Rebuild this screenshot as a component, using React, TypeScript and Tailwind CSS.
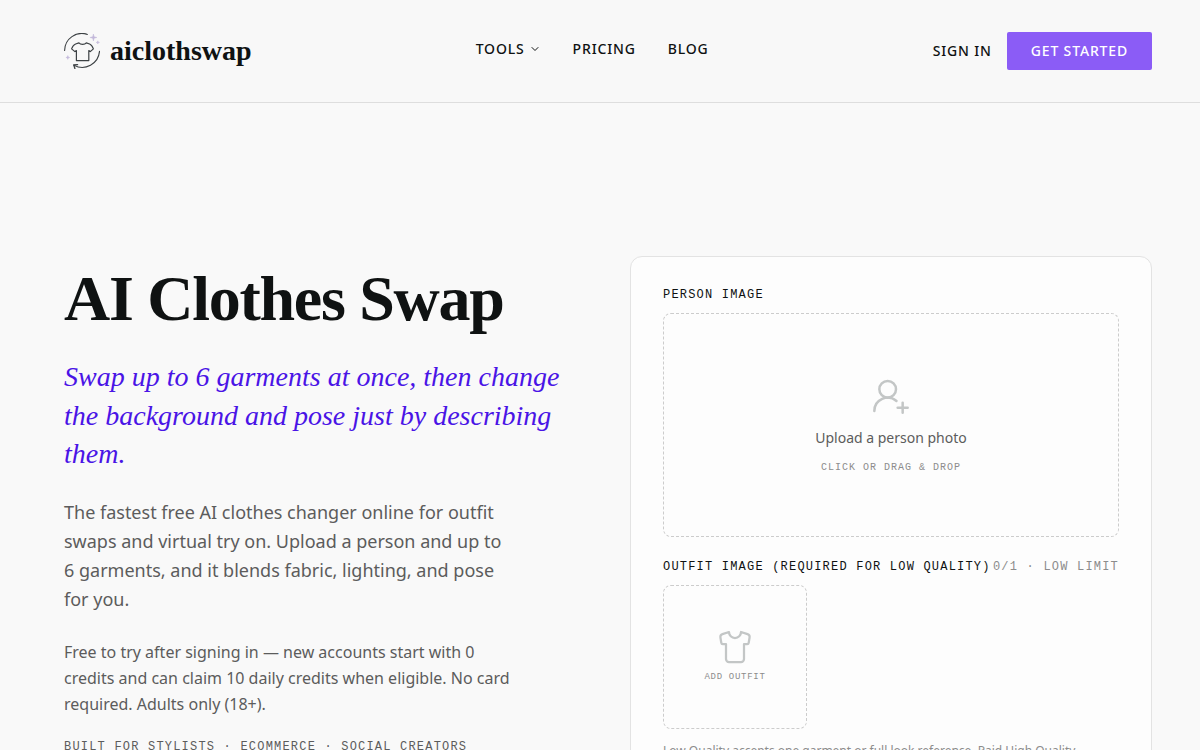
import type { ReactNode } from "react"
import { ChevronDown, Shirt, UserRoundPlus } from "lucide-react"

const serif = "font-['Liberation_Serif',serif]"
const mono = "font-['Liberation_Mono',monospace]"

const navItems = [
  { label: "Tools", href: "#tools", hasMenu: true },
  { label: "Pricing", href: "#pricing", hasMenu: false },
  { label: "Blog", href: "#blog", hasMenu: false },
]

function LogoMark() {
  return (
    <svg className="size-9" viewBox="0 0 36 36" fill="none" aria-hidden="true">
      <g stroke="#3c4144" strokeWidth="1.1" strokeLinecap="round" strokeLinejoin="round">
        <path d="M.6 17.4A17.2 17.2 0 0 1 23.4 1.4" />
        <path d="M35.5 18.4A17.3 17.3 0 0 1 10 32.2" />
        <path d="M13.6 31.7 9.7 31.9l1.2 3.6" strokeWidth="1.3" />
        <path
          d="M14.9 9.9c1.6 2 5.8 2 7.4 0l3.3 1.1c1.9.7 3 2.8 3.8 4.9l-3.1 2.7-1.5-1v10H12.4v-10l-1.5 1-3.3-2.7c.8-2.1 2.1-4.2 4-4.9z"
          strokeWidth="1.2"
        />
      </g>
      <g fill="#c3b8da" stroke="#c3b8da" strokeWidth=".5">
        <path d="M29.4 1l.7 2.7 2.8.8-2.8.7-.7 2.8-.7-2.8-2.8-.7 2.8-.8z" />
        <path d="M33.8 7.8l.4 1.2 1.3.4-1.3.4-.4 1.2-.4-1.2-1.2-.4 1.2-.4z" />
        <path d="M3.8 22.6l.5 1.4 1.4.5-1.4.4-.5 1.5-.4-1.5-1.5-.4 1.5-.5z" />
      </g>
    </svg>
  )
}

function Header() {
  return (
    <header className="flex items-center justify-between border-b border-[#dedede] bg-[#f8f8f8] py-8 pr-12 pl-16">
      <a href="#home" className="flex items-center gap-[10px]">
        <LogoMark />
        <span className={`${serif} text-[28px] leading-9 font-bold`}>aiclothswap</span>
      </a>

      <nav
        aria-label="Main"
        className="mb-1 flex items-center gap-8 text-sm font-medium tracking-[0.06em] text-[#0f1212] uppercase"
      >
        {navItems.map((item) =>
          item.hasMenu ? (
            <button key={item.label} type="button" className="flex items-center gap-1 tracking-[0.06em] uppercase">
              {item.label}
              <ChevronDown className="size-3" />
            </button>
          ) : (
            <a key={item.label} href={item.href}>
              {item.label}
            </a>
          ),
        )}
      </nav>

      <div className="flex items-center gap-[15px] text-sm font-medium">
        <a href="#sign-in" className="tracking-[0.06em] uppercase">
          Sign in
        </a>
        <button type="button" className="rounded-xs bg-[#8b5cf6] px-6 py-[9px] tracking-[0.06em] text-white uppercase">
          Get started
        </button>
      </div>
    </header>
  )
}

function HeroCopy() {
  return (
    <div className="pt-2">
      <h1 className={`${serif} mb-6 text-[64px] leading-[70px] font-bold tracking-[-0.02em]`}>AI Clothes Swap</h1>
      <p className={`${serif} mb-6 text-[28px] leading-snug text-[#4a14e6] italic`}>
        Swap up to 6 garments at once, then change the background and pose just by describing them.
      </p>
      <p className="mb-6 max-w-md text-lg leading-relaxed text-[#5c5c5c]">
        The fastest free AI clothes changer online for outfit swaps and virtual try on. Upload a person and up to 6
        garments, and it blends fabric, lighting, and pose for you.
      </p>
      <p className="mb-6 max-w-md text-base leading-relaxed text-[#5c5c5c]">
        Free to try after signing in — new accounts start with 0 credits and can claim 10 daily credits when eligible.
        No card required. Adults only (18+).
      </p>
      <p className={`${mono} text-xs leading-none tracking-widest text-[#5c5c5c] uppercase`}>
        Built for stylists · Ecommerce · Social creators
      </p>
    </div>
  )
}

function FieldLabel({ id, children, aside }: { id: string; children: ReactNode; aside?: string }) {
  return (
    <div className={`${mono} mb-3 flex justify-between text-xs leading-none tracking-widest uppercase`}>
      <span id={id}>{children}</span>
      {aside && <span className="text-[#8c8c8c]">{aside}</span>}
    </div>
  )
}

function UploadCard() {
  return (
    <section className="rounded-xl border border-[#e3e3e3] bg-[#fdfdfd] p-8">
      <FieldLabel id="person-label">Person image</FieldLabel>
      <button
        type="button"
        aria-describedby="person-label"
        className="flex h-56 w-full flex-col items-center justify-center gap-3 rounded-lg border border-dashed border-[#cccccc]"
      >
        <UserRoundPlus className="size-10 text-[#c3c6c6]" strokeWidth={1.5} />
        <span className="text-sm text-[#5c5c5c]">Upload a person photo</span>
        <span className={`${mono} text-[10px] leading-[15px] tracking-widest text-[#8c8c8c] uppercase`}>
          Click or drag &amp; drop
        </span>
      </button>

      <div className="mt-6">
        <FieldLabel id="outfit-label" aside="0/1 · Low limit">
          Outfit image (required for low quality)
        </FieldLabel>
        <button
          type="button"
          aria-describedby="outfit-label"
          className="flex size-36 flex-col items-center justify-center gap-1 rounded-lg border border-dashed border-[#cccccc]"
        >
          <Shirt className="size-9 text-[#c3c6c6]" strokeWidth={1.5} />
          <span className={`${mono} text-[9px] leading-4 tracking-[0.08em] text-[#8c8c8c] uppercase`}>
            Add outfit
          </span>
        </button>
        <p className="mt-3 text-xs leading-relaxed text-[#8c8c8c]">
          Low Quality accepts one garment or full look reference. Paid High Quality
        </p>
      </div>
    </section>
  )
}

export default function App() {
  return (
    <div className="min-h-screen bg-[#f9f9f9] font-['Noto_Sans',sans-serif] text-[#0f1212]">
      <Header />
      <main className="grid grid-cols-2 items-start gap-11 pt-[153px] pr-12 pb-16 pl-16">
        <HeroCopy />
        <UploadCard />
      </main>
    </div>
  )
}
